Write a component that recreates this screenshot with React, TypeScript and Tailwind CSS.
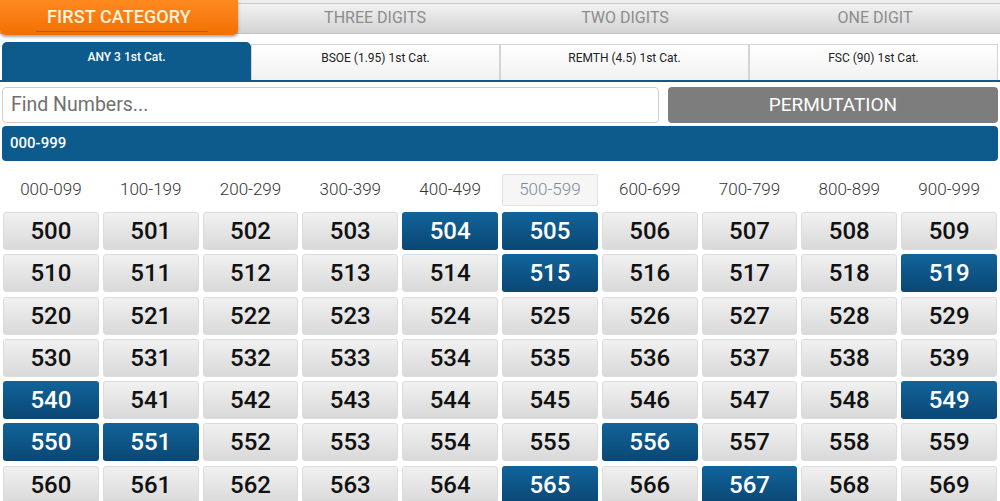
import React from "react";

const blue = new Set([504, 505, 515, 519, 540, 549, 550, 551, 556, 565, 567]);
const ranges = ["000-099","100-199","200-299","300-399","400-499","500-599","600-699","700-799","800-899","900-999"];
const subtabs = ["ANY 3 1st Cat.", "BSOE (1.95) 1st Cat.", "REMTH (4.5) 1st Cat.", "FSC (90) 1st Cat."];

export default function App() {
  const nums: number[] = [];
  for (let i = 500; i < 570; i++) nums.push(i);
  return (
    <div className="w-[1000px] h-[501px] overflow-hidden bg-white" style={{ fontFamily: "Roboto, 'Liberation Sans', sans-serif" }}>
      {/* top tabs */}
      <div className="relative h-[38px]">
        <div className="absolute left-0 right-0 top-0 h-[4px] bg-[#ececec] border-b border-[#c8c8c8]" />
        <div className="absolute left-0 right-0 top-[4px] h-[30px] bg-gradient-to-b from-[#f2f2f2] to-[#d3d3d3] border-b border-[#c4c4c4]" />
        <div className="relative grid grid-cols-4 h-[34px]">
          <div className="relative">
            <div className="absolute left-0 top-0 w-[238px] h-[35px] rounded-b-[5px] bg-gradient-to-b from-[#ff8a1f] to-[#f26f00] shadow-[0_2px_3px_rgba(0,0,0,0.35)] flex items-center justify-center">
              <span className="text-[18px] font-medium text-[#fff3dc] tracking-[0.1px] leading-none mt-[-2px]">FIRST CATEGORY</span>
              <div className="absolute left-[36px] right-[30px] bottom-[3px] h-[1px] bg-[#b85a10]" />
            </div>
          </div>
          <div className="flex items-center justify-center text-[16px] text-[#8c8c8c] pt-[2px]">THREE DIGITS</div>
          <div className="flex items-center justify-center text-[16px] text-[#8c8c8c] pt-[2px]">TWO DIGITS</div>
          <div className="flex items-center justify-center text-[16px] text-[#8c8c8c] pt-[2px]">ONE DIGIT</div>
        </div>
      </div>
      {/* sub tabs */}
      <div className="mt-[4px] px-[2px] border-b-[2px] border-[#0d5a8c]">
        <div className="grid grid-cols-4 items-end h-[38px]">
          {subtabs.map((t, i) =>
            i === 0 ? (
              <div key={t} className="h-[38px] rounded-t-[5px] bg-[#0d5a8c] text-white text-[12px] font-medium flex items-center justify-center pb-[8px]">{t}</div>
            ) : (
              <div key={t} className="h-[36px] bg-gradient-to-b from-[#ffffff] to-[#f1f1f1] border border-b-0 border-[#d4d4d4] text-[#222] text-[12px] flex items-center justify-center pb-[10px]">{t}</div>
            )
          )}
        </div>
      </div>
      {/* search row */}
      <div className="flex gap-[9px] px-[2px] mt-[5px] h-[36px]">
        <div className="w-[657px] h-full border border-[#cfcfcf] rounded-[4px] flex items-center px-[8px] text-[19.5px] text-[#707070]">Find Numbers...</div>
        <div className="flex-1 h-full rounded-[4px] bg-[#7d7d7d] flex items-center justify-center text-white text-[19px]">PERMUTATION</div>
      </div>
      {/* blue bar */}
      <div className="mx-[2px] mt-[3px] h-[35px] rounded-[4px] bg-[#0d5a8c] flex items-center px-[8px] text-white text-[15px] font-medium">000-999</div>
      {/* ranges */}
      <div className="grid grid-cols-10 gap-[4px] px-[3px] mt-[13px] h-[32px]">
        {ranges.map((r, i) => (
          <div key={r} className={"flex items-center justify-center text-[17px] font-light " + (i === 5 ? "bg-[#f6f6f6] border border-[#e2e2e2] rounded-[2px] text-[#7a8a9a]" : "text-[#333]")}>{r}</div>
        ))}
      </div>
      {/* grid */}
      <div className="grid grid-cols-10 gap-x-[4px] gap-y-[4.3px] px-[3px] mt-[6px]">
        {nums.map((n) => (
          <div
            key={n}
            className={
              "h-[38px] rounded-[3px] flex items-center justify-center text-[24px] font-medium leading-none " +
              (blue.has(n)
                ? "bg-gradient-to-b from-[#11649a] to-[#0a4774] text-white"
                : "bg-gradient-to-b from-[#f1f1f1] to-[#d9d9d9] text-[#111] border border-[#dcdcdc]")
            }
          >
            {n}
          </div>
        ))}
      </div>
    </div>
  );
}
